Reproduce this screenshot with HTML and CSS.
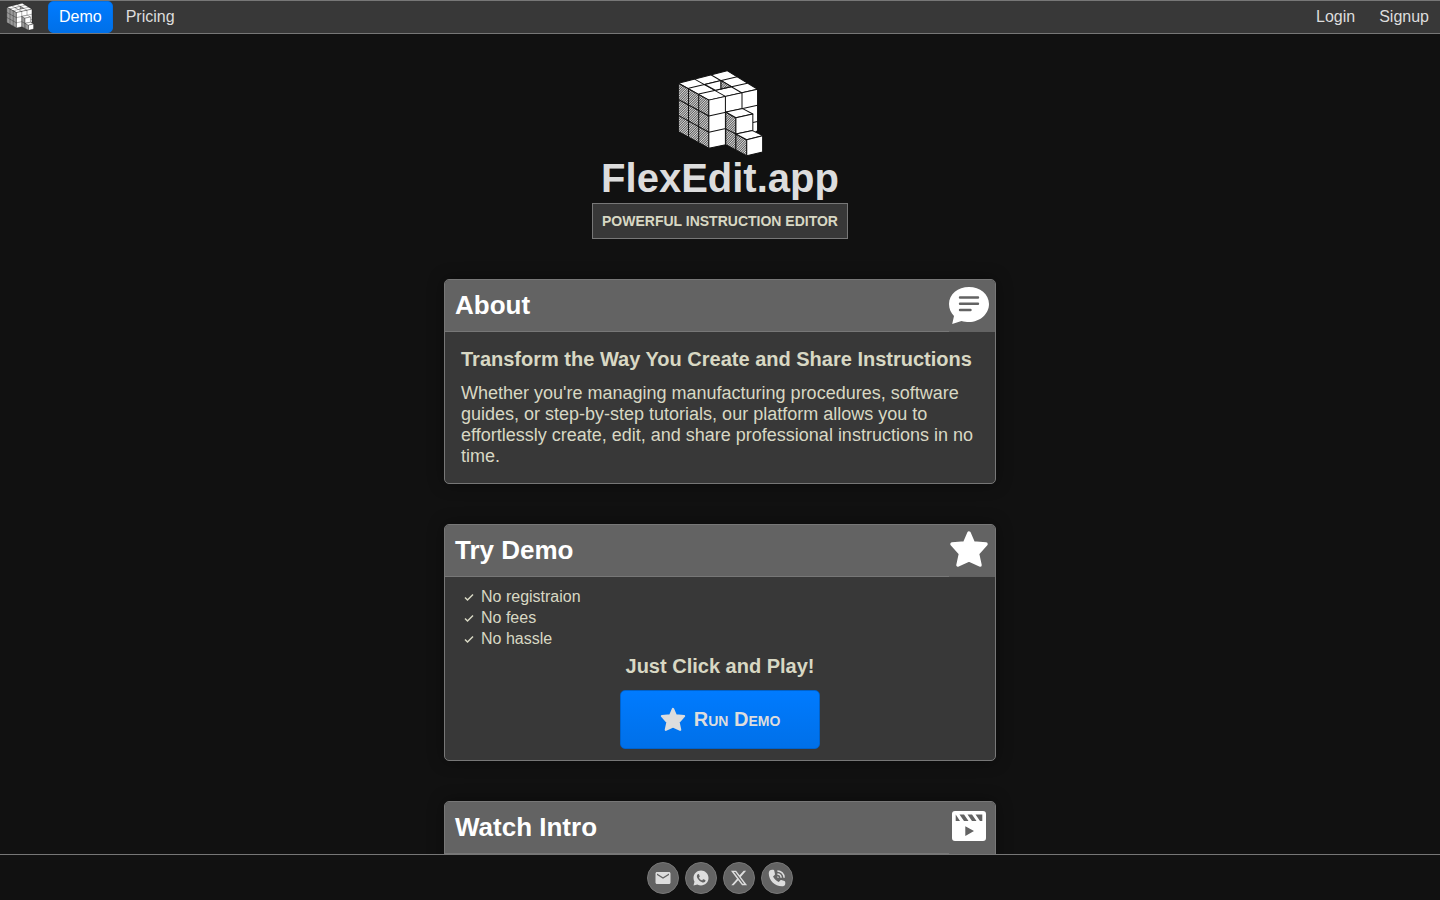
FILE: index.html
```html
<!DOCTYPE html>
<html lang="en">
<head>
    <meta charset="UTF-8">
    <meta name="viewport" content="width=device-width, initial-scale=1.0">
    <title>FlexEdit.app</title>
    <link rel="stylesheet" href="styles.css">
</head>
<body>
    <!-- shared shapes -->
    <svg class="sprite" aria-hidden="true">
        <defs>
            <pattern id="hatch" width="5" height="5" patternUnits="userSpaceOnUse" patternTransform="rotate(45)">
                <rect width="5" height="5" fill="#ddd"/>
                <rect width="2" height="5" fill="#333"/>
            </pattern>
        </defs>
        <symbol id="cube" viewBox="21 26 260 260">
            <g stroke="#111" stroke-width="3" stroke-linejoin="round">
                <path fill="#fff" d="M28 65 172 28 262 83 118 115Z"/>
                <path fill="url(#hatch)" d="M28 65 118 115V257L28 208Z"/>
                <path fill="#fff" d="M118 115 262 83V205L216 240 168 247 118 257Z"/>
                <path fill="none" d="M58 80 202 46M88 97 232 65M76 53 167 104M124 40 216 94"/>
                <path fill="#fff" d="M106 69 154 57V82L137 86Z"/>
                <path fill="url(#hatch)" d="M154 57 185 75 154 82Z"/>
                <path fill="none" d="M58 80V224M88 97V241M28 113 118 162M28 160 118 210"/>
                <path fill="none" d="M167 104V247M216 94V140M118 162 262 130M118 210 168 199M248 181 262 178"/>
                <path fill="url(#hatch)" d="M168 150 198 167V262L168 247Z"/>
                <path fill="#fff" d="M168 150 218 140 248 156 198 167Z"/>
                <path fill="#fff" d="M198 167 248 156V205L198 215Z"/>
                <path fill="none" d="M168 200 198 215"/>
                <path fill="url(#hatch)" d="M198 215 230 232V279L198 262Z"/>
                <path fill="#fff" d="M198 215 247 205 277 220 230 232Z"/>
                <path fill="#fff" d="M230 232 277 220V268L230 279Z"/>
            </g>
        </symbol>
        <symbol id="star" viewBox="0 0 40 40">
            <path d="M20 3 24.300 13 37 14 28.500 23.500 31 35 20 30 9 35 11.500 23.500 3 14 15.700 13Z" stroke="currentColor" stroke-width="3.500" stroke-linejoin="round"/>
        </symbol>
    </svg>

    <nav class="topbar">
        <a class="brand" href="#" aria-label="Home"><svg><use href="#cube"/></svg></a>
        <a class="nav-link active" href="#demo">Demo</a>
        <a class="nav-link" href="#">Pricing</a>
        <span class="spacer"></span>
        <a class="nav-link" href="#">Login</a>
        <a class="nav-link" href="#">Signup</a>
    </nav>

    <main class="content">
        <header class="hero">
            <svg class="hero-logo" aria-hidden="true"><use href="#cube"/></svg>
            <h1>FlexEdit.app</h1>
            <p class="tagline">Powerful instruction editor</p>
        </header>

        <section class="card">
            <div class="card-header">
                <h2>About</h2>
                <div class="card-icon">
                    <svg viewBox="0 0 40 40">
                        <path fill="currentColor" d="M20 2C9 2 0 9.300 0 19c0 5 2 9 5 12L3.200 39 12.500 36C15 36.800 17.500 37 20 37c11 0 20-8 20-18S31 2 20 2Z"/>
                        <path stroke="#636363" stroke-width="2.400" stroke-linecap="round" d="M11 12.500H29M11 18.700H29M11 25H21.500"/>
                    </svg>
                </div>
            </div>
            <div class="card-body">
                <h3>Transform the Way You Create and Share Instructions</h3>
                <p>Whether you're managing manufacturing procedures, software guides, or step-by-step tutorials, our platform allows you to effortlessly create, edit, and share professional instructions in no time.</p>
            </div>
        </section>

        <section class="card" id="demo">
            <div class="card-header">
                <h2>Try Demo</h2>
                <div class="card-icon"><svg><use href="#star"/></svg></div>
            </div>
            <div class="card-body demo-body">
                <ul class="checks">
                    <li><svg viewBox="0 0 16 16"><path d="M4 8.500 6.500 11 12 5.500"/></svg>No registraion</li>
                    <li><svg viewBox="0 0 16 16"><path d="M4 8.500 6.500 11 12 5.500"/></svg>No fees</li>
                    <li><svg viewBox="0 0 16 16"><path d="M4 8.500 6.500 11 12 5.500"/></svg>No hassle</li>
                </ul>
                <h3>Just Click and Play!</h3>
                <button class="run" type="button"><svg><use href="#star"/></svg>Run Demo</button>
            </div>
        </section>

        <section class="card">
            <div class="card-header">
                <h2>Watch Intro</h2>
                <div class="card-icon">
                    <svg viewBox="0 0 40 40">
                        <path fill="currentColor" fill-rule="evenodd" d="M6 4H34a3 3 0 0 1 3 3V31a3 3 0 0 1-3 3H6a3 3 0 0 1-3-3V7a3 3 0 0 1 3-3ZM6.700 7.500V14H11ZM10.500 7.500 15 14H19.500L15 7.500ZM18.500 7.500 23 14H27.500L23 7.500ZM26.500 7.500 31 14H33.300V7.500ZM16.300 19.300V29L25 24Z"/>
                    </svg>
                </div>
            </div>
            <div class="card-body"></div>
        </section>
    </main>

    <footer class="bottombar">
        <a href="#" aria-label="Email">
            <svg viewBox="0 0 24 24"><path d="M20 4H4c-1.100 0-2 .9-2 2v12c0 1.100.9 2 2 2h16c1.100 0 2-.9 2-2V6c0-1.100-.9-2-2-2zm0 4-8 5-8-5V6l8 5 8-5v2z"/></svg>
        </a>
        <a href="#" aria-label="WhatsApp">
            <svg viewBox="0 0 24 24"><path fill-rule="evenodd" d="M12 2C6.500 2 2 6.500 2 12c0 1.800.5 3.500 1.300 5L2 22l5.200-1.300c1.500.8 3.100 1.200 4.800 1.200 5.500 0 10-4.400 10-9.900S17.500 2 12 2ZM8.500 6.800c.5 0 .7 0 .9.500l.9 2.200c.1.300 0 .5-.1.700l-.8 1c-.2.200-.2.400 0 .7.900 1.500 2 2.500 3.600 3.200.3.200.5.200.7-.1l1-1.200c.2-.3.400-.3.700-.2l2.100 1c.3.200.5.300.5.500 0 2-1.500 2.900-3 2.900-1 0-3.300-.8-5.100-2.400C7.900 13.700 6.700 11.700 6.500 10c-.1-1.500.9-3.200 2-3.200Z"/></svg>
        </a>
        <a href="#" aria-label="X">
            <svg viewBox="0 0 24 24"><path d="M18.200 2.200h3.300l-7.200 8.300 8.500 11.200h-6.700l-5.200-6.800-6 6.800H1.700l7.700-8.800L1.300 2.200h6.800l4.700 6.200zm-1.200 17.600h1.800L7.100 4.100h-2z"/></svg>
        </a>
        <a href="#" aria-label="Phone">
            <svg viewBox="0 0 24 24">
                <path d="M5.500 1C3 1 1 2.500 1 5.500 1 15 9 23 18.500 23c2.500 0 4-.5 4.500-3v-2.500c0-.7-.4-1.200-1-1.400l-4.300-1.300c-.5-.1-1 0-1.400.4l-2 2.200C11.200 15.900 8.300 13 6.700 10l2.200-2c.4-.4.5-.9.4-1.400L8.300 2c-.2-.6-.7-1-1.300-1Z"/>
                <path class="wave" d="M12.500 2.500a9 9 0 0 1 9 9M12.500 6.500a5 5 0 0 1 5 5M12.500 10.500a1 1 0 0 1 1 1"/>
            </svg>
        </a>
    </footer>
</body>
</html>
```
FILE: styles.css
```css
* {
    box-sizing: border-box;
}
html {
    height: 100%;
}
body {
    display: flex;
    flex-direction: column;
    height: 100%;
    margin: 0;
    background-color: #111;
    color: #ddd;
    font-family: "Liberation Sans", Arial, sans-serif;
    font-size: 16px;
}
h1, h2, h3, p, ul {
    margin: 0;
}
a {
    color: inherit;
    text-decoration: none;
}
.sprite {
    position: absolute;
    width: 0;
    height: 0;
}

/* top navigation */
.topbar {
    display: flex;
    gap: 2px;
    flex-shrink: 0;
    background-color: #383838;
    border-top: 1px solid #777;
    border-bottom: 1px solid #777;
}
.brand {
    width: 46px;
    padding: 2px 6px;
}
.brand svg {
    display: block;
    width: 28px;
    height: 28px;
}
.nav-link {
    padding: 0 10px;
    border: 1px solid transparent;
    border-radius: 5px;
    line-height: 30px;
}
.nav-link.active {
    background: linear-gradient(#007bff, #0070e8);
    border-color: #0070e8;
    color: #fff;
}
.spacer {
    flex: 1;
}

/* scrolling content */
.content {
    flex: 1;
    min-height: 0;
    overflow-y: auto;
    scrollbar-width: none;
    display: flex;
    flex-direction: column;
    align-items: center;
    gap: 40px;
    padding: 36px 16px 0;
}
.hero {
    display: flex;
    flex-direction: column;
    align-items: center;
}
.hero-logo {
    width: 88px;
    height: 88px;
}
.hero h1 {
    margin-bottom: 4px;
    font-size: 40px;
    line-height: 41px;
}
.tagline {
    padding: 9px;
    border: 1px solid #777;
    background-color: #383838;
    color: #d8d8c4;
    font-size: 14px;
    font-weight: bold;
    line-height: 16px;
    text-transform: uppercase;
}
.card {
    flex-shrink: 0;
    width: 100%;
    max-width: 552px;
    overflow: hidden;
    border: 1px solid #777;
    border-radius: 5px;
    background-color: #383838;
    box-shadow: 0 0 16px rgba(0, 0, 0, 0.4);
    color: #d8d8c4;
}
.card-header {
    display: flex;
    background-color: #636363;
    color: #fff;
}
.card-header h2 {
    flex: 1;
    padding: 0 10px;
    border-bottom: 1px solid #777;
    font-size: 26px;
    line-height: 51px;
}
.card-icon {
    width: 46px;
    padding-top: 5px;
}
.card-icon svg {
    display: block;
    width: 40px;
    height: 40px;
    fill: currentColor;
}
.card-body {
    padding: 16px;
    font-size: 18px;
    line-height: 21px;
}
.card-body h3 {
    margin-bottom: 12px;
    font-size: 20px;
    line-height: 23px;
}
.demo-body {
    display: flex;
    flex-direction: column;
    align-items: center;
    padding: 9px 16px 11px;
}
.checks {
    align-self: stretch;
    margin-bottom: 6px;
    padding: 0;
    list-style: none;
    font-size: 16px;
}
.checks li {
    display: flex;
    align-items: center;
    gap: 4px;
}
.checks svg {
    width: 16px;
    height: 16px;
    fill: none;
    stroke: currentColor;
    stroke-width: 1.5;
}
.run {
    display: flex;
    align-items: center;
    gap: 8px;
    padding: 15px 39px;
    border: 1px solid #0062cc;
    border-radius: 5px;
    background: linear-gradient(#007bff, #0070e8);
    color: #ddd;
    font-family: inherit;
    font-size: 20px;
    font-weight: bold;
    font-variant: small-caps;
    line-height: 27px;
    cursor: pointer;
}
.run svg {
    width: 26px;
    height: 26px;
    fill: currentColor;
}

/* contact links */
.bottombar {
    display: flex;
    justify-content: center;
    flex-shrink: 0;
    gap: 6px;
    padding: 7px 0 6px;
    border-top: 1px solid #777;
    background-color: #111;
}
.bottombar a {
    display: flex;
    align-items: center;
    justify-content: center;
    width: 32px;
    height: 32px;
    border: 1px solid #777;
    border-radius: 50%;
    background-color: #636363;
}
.bottombar svg {
    width: 18px;
    height: 18px;
    fill: currentColor;
}
.bottombar .wave {
    fill: none;
    stroke: currentColor;
    stroke-width: 2;
}
```
